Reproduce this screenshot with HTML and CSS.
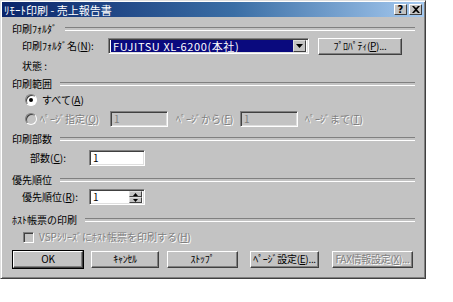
FILE: index.html
```html
<!DOCTYPE html>
<html lang="ja">
<head>
  <meta charset="UTF-8">
  <title>ﾘﾓｰﾄ印刷 - 売上報告書</title>
  <link rel="stylesheet" href="styles.css">
</head>
<body>

  <div class="dialogo">
    <!-- Barra de título -->
    <div class="barra-titulo">
      <span class="titulo">ﾘﾓｰﾄ印刷 - 売上報告書</span>
      <div class="botoes-titulo">
        <span class="botao-titulo">?</span>
        <span class="botao-titulo">
          <svg width="8" height="7" viewBox="0 0 8 7"><path d="M0 0h2l2 2 2-2h2L5 3.5 8 7H6L4 5 2 7H0l3-3.5z" fill="#000"/></svg>
        </span>
      </div>
    </div>

    <div class="conteudo">
      <div class="grupo grupo-pasta"><span>印刷ﾌｫﾙﾀﾞ</span></div>
      <div class="linha linha-impressora">
        <span class="rotulo rotulo-largo">印刷ﾌｫﾙﾀﾞ名(<u>N</u>):</span>
        <div class="combo">
          <span class="combo-valor">FUJITSU XL-6200(本社)</span>
          <span class="combo-seta">
            <svg width="7" height="4" viewBox="0 0 7 4"><path d="M0 0h7L3.5 4z" fill="#000"/></svg>
          </span>
        </div>
        <span class="botao botao-propriedades">ﾌﾟﾛﾊﾟﾃｨ(<u>P</u>)...</span>
      </div>
      <div class="linha linha-estado">
        <span class="rotulo">状態 :</span>
      </div>

      <div class="grupo grupo-intervalo"><span>印刷範囲</span></div>
      <div class="linha linha-radio">
        <span class="radio marcado"></span>
        <span>すべて(<u>A</u>)</span>
      </div>
      <div class="linha linha-paginas desabilitado">
        <span class="radio"></span>
        <span class="rotulo-radio">ﾍﾟｰｼﾞ指定(<u>Q</u>)</span>
        <span class="campo campo-pagina">1</span>
        <span class="texto-pagina">ﾍﾟｰｼﾞから(<u>F</u>)</span>
        <span class="campo campo-pagina">1</span>
        <span class="texto-pagina texto-ate">ﾍﾟｰｼﾞまで(<u>T</u>)</span>
      </div>

      <div class="grupo grupo-copias"><span>印刷部数</span></div>
      <div class="linha linha-copias">
        <span class="rotulo rotulo-copias">部数(<u>C</u>):</span>
        <span class="campo campo-numero">1</span>
      </div>

      <div class="grupo grupo-prioridade"><span>優先順位</span></div>
      <div class="linha linha-prioridade">
        <span class="rotulo rotulo-prioridade">優先順位(<u>R</u>):</span>
        <div class="campo campo-numero campo-spin">
          <span class="spin-valor">1</span>
          <span class="spin-botoes">
            <span class="spin-botao"><svg width="5" height="3" viewBox="0 0 5 3"><path d="M2.5 0L5 3H0z" fill="#000"/></svg></span>
            <span class="spin-botao"><svg width="5" height="3" viewBox="0 0 5 3"><path d="M0 0h5L2.5 3z" fill="#000"/></svg></span>
          </span>
        </div>
      </div>

      <div class="grupo grupo-host"><span>ﾎｽﾄ帳票の印刷</span></div>
      <div class="linha linha-check desabilitado">
        <span class="check"></span>
        <span>VSPｼﾘｰｽﾞにﾎｽﾄ帳票を印刷する(<u>H</u>)</span>
      </div>

      <div class="linha linha-botoes">
        <span class="botao botao-padrao">OK</span>
        <span class="botao botao-cancelar">ｷｬﾝｾﾙ</span>
        <span class="botao botao-parar">ｽﾄｯﾌﾟ</span>
        <span class="botao botao-pagina">ﾍﾟｰｼﾞ設定(<u>E</u>)...</span>
        <span class="botao botao-fax desabilitado">FAX情報設定(<u>X</u>)...</span>
      </div>
    </div>
  </div>

</body>
</html>
```

FILE: styles.css
```css
/* Reset básico */
* {
  margin: 0;
  padding: 0;
  box-sizing: border-box;
}

body {
  font-family: "Noto Sans CJK JP", "DejaVu Sans", sans-serif;
  font-size: 10px;
  line-height: 16px;
  color: #000;
  background-color: #fff;
  white-space: nowrap;
}

u {
  text-decoration: underline;
  text-underline-offset: 1px;
}

/* Janela do diálogo */
.dialogo {
  width: 426px;
  height: 279px;
  padding: 1px;
  background-color: #c3c3c3;
  border: 1px solid;
  border-color: #dfdfdf #404040 #404040 #dfdfdf;
  box-shadow: inset 1px 1px #fff, inset -1px -1px #808080;
}

.barra-titulo {
  display: flex;
  justify-content: space-between;
  align-items: center;
  height: 15px;
  padding: 0 2px 0 2px;
  background: linear-gradient(to right, #0a246a, #3a6ea5 55%, #a6caf0);
  color: #fff;
}

.titulo {
  font-size: 11px;
}

.botoes-titulo {
  display: flex;
  gap: 2px;
}

.botao-titulo {
  display: flex;
  align-items: center;
  justify-content: center;
  width: 13px;
  height: 11px;
  background-color: #c3c3c3;
  color: #000;
  font-weight: bold;
  font-size: 10px;
  font-family: "DejaVu Sans", sans-serif;
  line-height: 11px;
  border: 1px solid;
  border-color: #fff #404040 #404040 #fff;
}

/* Conteúdo */
.conteudo {
  padding: 0 9px 0 10px;
}

.grupo {
  display: flex;
  align-items: center;
  height: 16px;
  gap: 8px;
}

.grupo::after {
  content: "";
  flex: 1;
  height: 2px;
  border-top: 1px solid #808080;
  border-bottom: 1px solid #fff;
}

.grupo-pasta { margin-top: 4px; }
.grupo-intervalo { margin-top: 2px; }
.grupo-copias { margin-top: 4px; }
.grupo-prioridade { margin-top: 6px; }
.grupo-host { margin-top: 7px; }

.linha {
  display: flex;
  align-items: center;
  height: 16px;
}

.linha-impressora { margin-top: 1px; padding-left: 10px; }
.linha-estado { margin-top: 4px; padding-left: 10px; }
.linha-radio { padding-left: 13px; gap: 5px; }
.linha-paginas { margin-top: 3px; padding-left: 13px; }
.linha-copias { margin-top: 3px; padding-left: 18px; }
.linha-prioridade { margin-top: 1px; padding-left: 10px; }
.linha-check { margin-top: 1px; padding-left: 11px; gap: 5px; }
.linha-botoes { margin-top: 6px; padding-left: 1px; gap: 8px; }

.rotulo-largo { width: 86px; }
.rotulo-copias { width: 59px; }
.rotulo-prioridade { width: 67px; }

.desabilitado {
  color: #808080;
  text-shadow: 1px 1px #fff;
}

/* Combo da impressora */
.combo {
  display: flex;
  align-items: center;
  width: 201px;
  height: 16px;
  padding: 2px;
  background-color: #fff;
  border: 1px solid;
  border-color: #808080 #fff #fff #808080;
  box-shadow: inset 1px 1px #404040, inset -1px -1px #dfdfdf;
}

.combo-valor {
  flex: 1;
  height: 12px;
  line-height: 12px;
  padding-left: 2px;
  background-color: #0a0a7e;
  color: #fff;
  font-size: 11px;
  letter-spacing: 0.6px;
}

.combo-seta {
  display: flex;
  align-items: center;
  justify-content: center;
  width: 13px;
  height: 12px;
  background-color: #c3c3c3;
  border: 1px solid;
  border-color: #dfdfdf #404040 #404040 #dfdfdf;
}

/* Botões */
.botao {
  display: flex;
  align-items: center;
  justify-content: center;
  height: 17px;
  background-color: #c3c3c3;
  border: 1px solid;
  border-color: #fff #404040 #404040 #fff;
  box-shadow: inset -1px -1px #808080;
  letter-spacing: -0.3px;
}

.botao-propriedades { width: 84px; margin-left: 9px; }
.botao-padrao {
  width: 70px;
  outline: 1px solid #000;
}
.botao-cancelar { width: 68px; }
.botao-parar { width: 71px; }
.botao-pagina { width: 69px; margin-left: 4px; }
.botao-fax { width: 81px; margin-left: 5px; }

/* Radio e checkbox */
.radio {
  width: 12px;
  height: 12px;
  border-radius: 50%;
  background-color: #fff;
  border: 1px solid;
  border-color: #808080 #fff #fff #808080;
  box-shadow: inset 1px 1px #404040;
  position: relative;
}

.radio.marcado::after {
  content: "";
  position: absolute;
  left: 3px;
  top: 3px;
  width: 4px;
  height: 4px;
  border-radius: 50%;
  background-color: #000;
}

.desabilitado .radio {
  background-color: #c3c3c3;
}

.rotulo-radio {
  width: 70px;
  margin-left: 3px;
}

.check {
  width: 11px;
  height: 11px;
  background-color: #c3c3c3;
  border: 1px solid;
  border-color: #808080 #fff #fff #808080;
  box-shadow: inset 1px 1px #404040;
}

/* Campos de texto */
.campo {
  display: flex;
  align-items: center;
  height: 16px;
  padding-left: 3px;
  background-color: #fff;
  border: 1px solid;
  border-color: #808080 #fff #fff #808080;
  box-shadow: inset 1px 1px #404040, inset -1px -1px #dfdfdf;
  color: #000;
  text-shadow: none;
}

.campo-pagina {
  width: 58px;
  background-color: #c3c3c3;
  color: #808080;
}

.texto-pagina {
  width: 64px;
  margin-left: 8px;
}

.texto-ate { margin-left: 7px; }

.campo-numero { width: 56px; }

.campo-spin {
  padding-right: 2px;
}

.spin-valor { flex: 1; }

.spin-botoes {
  display: flex;
  flex-direction: column;
  width: 13px;
  height: 12px;
}

.spin-botao {
  display: flex;
  align-items: center;
  justify-content: center;
  flex: 1;
  background-color: #c3c3c3;
  border: 1px solid;
  border-color: #dfdfdf #404040 #404040 #dfdfdf;
}
```
